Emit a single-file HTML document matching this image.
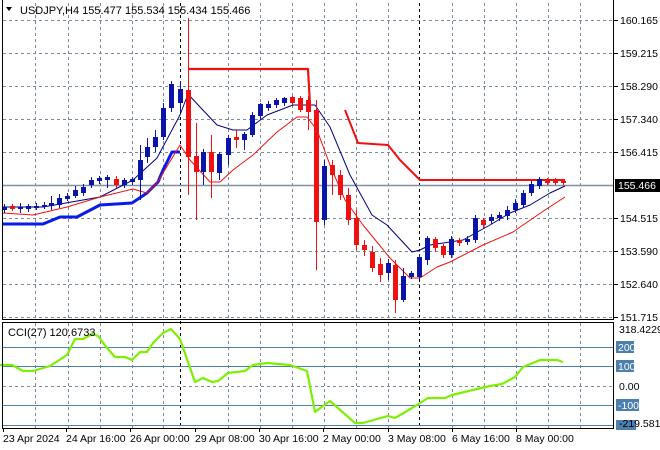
<!DOCTYPE html>
<html><head><meta charset="utf-8"><style>
body{margin:0;background:#fff;width:660px;height:450px;overflow:hidden;}
svg{position:absolute;left:0;top:0}
text{font-family:"Liberation Sans",Arial,sans-serif;font-size:10.5px;fill:#000}
</style></head><body>
<svg id="s" width="660" height="450" viewBox="0 0 660 450" xmlns="http://www.w3.org/2000/svg">
<g id="grid" stroke="#7a8a99" stroke-dasharray="3,3" stroke-width="1"></g>
<g id="lv"></g>
<g id="ind"></g>
<g id="cd"></g>
<g id="fr" fill="none" stroke="#000">
<line x1="2.5" y1="0" x2="2.5" y2="319"/><line x1="2" y1="319.5" x2="614" y2="319.5"/>
<line x1="613.5" y1="0" x2="613.5" y2="319"/>
<rect x="2.5" y="322.5" width="611" height="106"/>
</g>
<g id="tx"></g>
<text x="20" y="14" style="font-size:11px">USDJPY,H4  155.477 155.534 155.434 155.466</text>
<polygon points="6,7 12,7 9,11" fill="#000"/>
<text x="8" y="336" style="font-size:11px">CCI(27) 120.6733</text>
</svg>
<script>
const NS="http://www.w3.org/2000/svg";
function el(p,t,a){const e=document.createElementNS(NS,t);for(const k in a)e.setAttribute(k,a[k]);document.getElementById(p).appendChild(e);return e;}
const vx=[35,68,100,132,163,228,260,292,324,356,388,452,484,516,548,580];
vx.forEach(x=>{el('grid','line',{x1:x+.5,y1:3,x2:x+.5,y2:319});el('grid','line',{x1:x+.5,y1:323,x2:x+.5,y2:428});});
[180,419].forEach(x=>{el('grid','line',{x1:x+.5,y1:3,x2:x+.5,y2:428,stroke:'#000'});});
const hy=[20,53,86,119,152,185,218,251,284,317];
hy.forEach(y=>el('grid','line',{x1:3,y1:y+.5,x2:613,y2:y+.5}));
el('grid','line',{x1:3,y1:386.5,x2:613,y2:386.5});
el('lv','line',{x1:3,y1:185.5,x2:613,y2:185.5,stroke:'#8090a0','stroke-width':1.5});
[347,366,405,425].forEach(y=>el('lv','line',{x1:3,y1:y+.5,x2:613,y2:y+.5,stroke:'#4a7fae'}));
function pl(pts,c,w){el('ind','polyline',{points:pts,fill:'none',stroke:c,'stroke-width':w,'stroke-linejoin':'round'});}
pl("3,224 43,224 60,217 77,217 100,205 132,203 147,193 158,182 163,170 172,152 180,152","#0a1ae8",3);
pl("188,69 308,69 310,105","#f01010",2.2);
pl("345,110 358,143 388,145 400,160 420,180 565,180","#f01010",2);
pl("3,207 43,207 100,197 133,180 157,158 180,115 188,94 200,107 217,125 233,130 247,130 267,115 293,105 315,105 330,127 350,175 372,215 387,225 412,252 420,250 430,245 463,240 490,225 510,213 530,205 550,193 565,186","#000080",1);
pl("3,213 33,215 67,207 100,197 133,189 147,193 157,183 180,145 190,160 210,182 220,182 233,170 253,155 277,132 297,117 307,117 317,130 330,165 345,200 363,225 390,258 410,278 420,278 437,267 450,262 483,245 513,232 523,225 545,210 565,197","#f01010",1);
pl("0,365 12,365 23,371 33,371 50,366 67,355 75,339 83,339 92,334 98,336 107,348 115,357 125,357 132,360 140,352 147,352 153,343 163,333 171,329 180,339 195,382 203,378 212,382 218,381 228,373 245,371 253,365 267,363 290,365 307,371 315,412 323,406 330,401 355,423 363,423 377,419 388,416 395,418 412,408 428,398 445,398 452,395 477,389 490,386 502,384 515,377 523,367 540,360 557,360 563,362","#7cf000",2.2);
const C=[
[4,207,210,204,213,'b'],[12,206,209,204,211,'r'],[20,207,209,203,213,'b'],[28,206,209,204,212,'b'],[36,206,208,203,210,'b'],[44,205,207,202,209,'b'],
[51,203,206,196,210,'b'],[59,198,205,194,208,'b'],[67,196,199,193,201,'b'],[75,190,196,186,198,'b'],[83,187,193,184,196,'b'],[91,180,185,177,188,'b'],
[99,178,181,176,184,'b'],[107,177,180,175,188,'b'],[116,179,185,176,188,'r'],[124,180,185,178,188,'b'],[132,179,182,177,185,'b'],[140,160,180,145,200,'b'],
[147,147,157,138,163,'b'],[155,137,147,130,152,'b'],[163,108,137,103,140,'b'],[171,84,108,81,112,'b'],[180,89,103,81,112,'b'],[188,90,157,18,195,'r'],
[196,156,172,123,220,'r'],[203,152,172,149,185,'b'],[211,152,172,135,198,'r'],[219,154,173,152,180,'b'],[228,138,155,135,165,'b'],[236,137,140,130,148,'r'],
[244,134,140,132,150,'b'],[252,115,135,112,137,'b'],[260,104,116,103,120,'b'],[268,104,108,101,111,'b'],[276,100,105,98,108,'b'],[284,98,103,97,106,'b'],
[292,97,103,96,105,'r'],[300,98,110,96,112,'r'],[308,100,112,96,130,'r'],[316,110,222,100,270,'r'],[324,166,220,160,225,'b'],[332,165,175,160,195,'r'],
[340,175,195,170,200,'r'],[348,195,220,188,225,'r'],[356,218,245,210,250,'r'],[364,245,250,240,256,'r'],[372,252,268,246,272,'r'],[380,264,275,258,282,'r'],
[388,263,273,259,280,'b'],[395,265,300,260,313,'r'],[403,276,300,268,302,'b'],[411,273,277,271,279,'b'],[419,257,277,254,279,'b'],[427,238,260,236,265,'b'],
[435,239,248,237,252,'r'],[443,246,255,244,258,'r'],[451,239,255,236,258,'b'],[459,240,243,238,246,'r'],[467,239,242,236,245,'b'],[475,218,240,215,243,'b'],
[483,220,225,218,228,'r'],[491,217,221,214,224,'b'],[499,215,218,212,221,'b'],[507,210,216,206,220,'b'],[515,203,210,199,213,'b'],[523,193,205,190,208,'b'],
[531,184,193,181,196,'b'],[539,179,186,177,189,'b'],[547,180,183,178,185,'r'],[555,180,183,178,185,'r'],[563,181,183,179,185,'r']];
C.forEach(c=>{const col=c[5]=='b'?'#0a14a8':'#f01010';
el('cd','line',{x1:c[0]+.5,y1:c[3],x2:c[0]+.5,y2:c[4],stroke:col,'stroke-width':1});
el('cd','rect',{x:c[0]-2,y:c[1],width:5,height:Math.max(2,c[2]-c[1]),fill:col});});
const P=[[20,'160.165'],[53,'159.215'],[86,'158.290'],[119,'157.340'],[152,'156.415'],[218,'154.515'],[251,'153.590'],[284,'152.640'],[317,'151.715']];
P.forEach(p=>{el('tx','line',{x1:614,y1:p[0]+.5,x2:618,y2:p[0]+.5,stroke:'#000'});const t=el('tx','text',{x:620,y:p[0]+4});t.textContent=p[1];});
el('tx','rect',{x:615,y:179,width:45,height:13,fill:'#000'});
let t=el('tx','text',{x:618,y:189,style:'fill:#fff'});t.textContent='155.466';
[[347,'200'],[366,'100'],[405,'-100']].forEach(p=>{el('tx','rect',{x:616,y:p[0]-6,width:p[1].length>3?23:18,height:12,fill:'#4a7fae'});const q=el('tx','text',{x:618,y:p[0]+4,style:'fill:#fff'});q.textContent=p[1];});
el('tx','rect',{x:616,y:420,width:20,height:10,fill:'#4a7fae'});
[[333,'318.4229'],[390,'0.00'],[427,'-219.5818']].forEach(p=>{const q=el('tx','text',{x:619,y:p[0]});q.textContent=p[1];});
[[3,'23 Apr 2024'],[66,'24 Apr 16:00'],[130,'26 Apr 00:00'],[195,'29 Apr 08:00'],[259,'30 Apr 16:00'],[323,'2 May 00:00'],[388,'3 May 08:00'],[452,'6 May 16:00'],[516,'8 May 00:00']].forEach(p=>{
el('tx','line',{x1:p[0]+.5,y1:428,x2:p[0]+.5,y2:432,stroke:'#000'});const q=el('tx','text',{x:p[0],y:442});q.textContent=p[1];});
</script>
</body></html>
